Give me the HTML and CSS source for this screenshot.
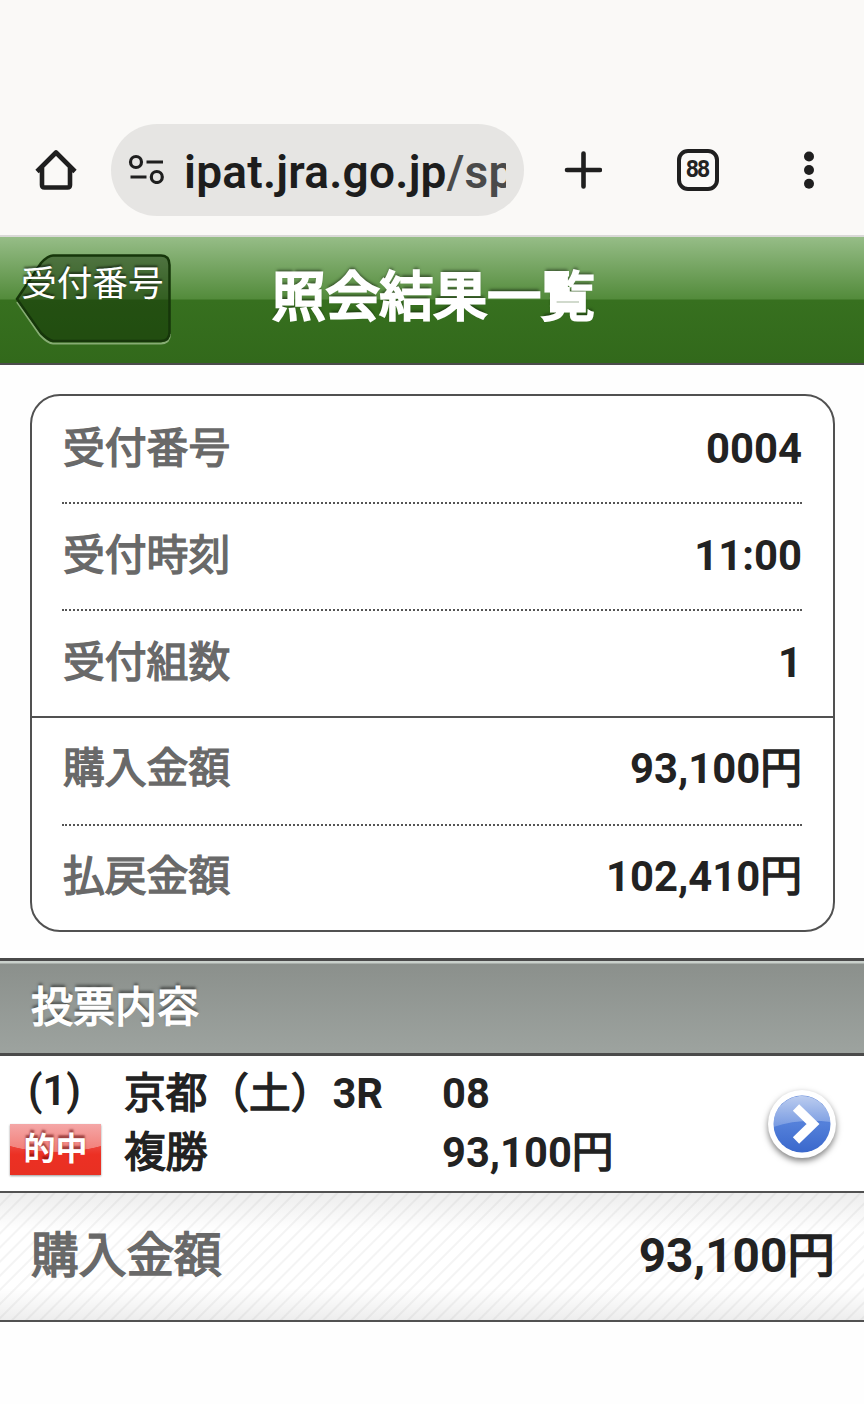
FILE: index.html
```html
<!DOCTYPE html>
<html lang="ja">

<head>
    <meta charset="UTF-8">
    <meta name="viewport" content="width=device-width, initial-scale=1.0">
    <title>照会結果一覧</title>
    <link rel="stylesheet" href="styles.css">
</head>

<body>

    <!-- browser bar -->
    <div class="browser">
        <svg class="icon-home" width="44" height="44" viewBox="0 0 44 44">
            <path d="M3 23.500 L22 4.500 L41 23.500 M8 19 V37 Q8 39.500 10.500 39.500 H33.500 Q36 39.500 36 37 V19" fill="none" stroke="#1f1f1f" stroke-width="4.600" stroke-linejoin="round"/>
        </svg>
        <div class="url-box">
            <svg class="icon-tune" width="36" height="30" viewBox="0 0 36 30">
                <g fill="none" stroke="#1f1f1f" stroke-width="3.200">
                    <circle cx="8" cy="8" r="5.500"/>
                    <path d="M18.500 8 H35 M2.500 23 H18.500"/>
                    <circle cx="28.800" cy="23" r="5.500"/>
                </g>
            </svg>
            <div class="url">ipat.jra.go.jp<span>/sp</span></div>
        </div>
        <svg class="icon-plus" width="38" height="38" viewBox="0 0 38 38">
            <path d="M19.500 2.500 V35.500 M3 19 H36" stroke="#1f1f1f" stroke-width="4.600" stroke-linecap="round"/>
        </svg>
        <div class="tabs">88</div>
        <svg class="icon-menu" width="12" height="38" viewBox="0 0 12 38" fill="#1f1f1f">
            <circle cx="6" cy="5.500" r="5"/>
            <circle cx="6" cy="19" r="5"/>
            <circle cx="6" cy="32.700" r="5"/>
        </svg>
    </div>

    <header class="header">
        <div class="back">
            <svg class="back-shape" width="160" height="96" viewBox="0 0 160 96">
                <path d="M2 49 L25 82 Q33 90.500 38 90.500 H146 Q155 90 155 81" fill="none" stroke="#86ac73" stroke-width="2"/>
                <path d="M2 46 L26 10 Q33 2.500 38 2.500 H146 Q154.500 2.500 154.500 12 V79 Q154.500 88 146 88 H38 Q33 87 26 80 Z" fill="#0a2400" fill-opacity=".42" stroke="#16360a" stroke-width="2.500"/>
            </svg>
            <span class="back-text">受付番号</span>
        </div>
        <h1 class="ja">照会結果一覧</h1>
    </header>

    <div class="card">
        <div class="group">
            <div class="row"><span class="label ja">受付番号</span><span>0004</span></div>
            <div class="row"><span class="label ja">受付時刻</span><span>11:00</span></div>
            <div class="row"><span class="label ja">受付組数</span><span>1</span></div>
        </div>
        <div class="group">
            <div class="row"><span class="label ja">購入金額</span><span>93,100<span class="ja">円</span></span></div>
            <div class="row"><span class="label ja">払戻金額</span><span>102,410<span class="ja">円</span></span></div>
        </div>
    </div>

    <h2 class="section ja">投票内容</h2>

    <div class="bet">
        <div class="bet-no">
            <div class="num">(1)</div>
            <div class="hit">的中</div>
        </div>
        <div class="bet-race">
            <div><span class="ja">京都（土）</span>3R</div>
            <div class="ja">複勝</div>
        </div>
        <div class="bet-money">
            <div>08</div>
            <div>93,100<span class="ja">円</span></div>
        </div>
        <svg class="arrow" width="84" height="84" viewBox="0 0 84 84">
            <defs>
                <linearGradient id="blue" x1="0" y1="0" x2="0" y2="1">
                    <stop offset="0" stop-color="#4f7bd6"/>
                    <stop offset=".5" stop-color="#5480da"/>
                    <stop offset="1" stop-color="#3a68cc"/>
                </linearGradient>
                <linearGradient id="gloss" x1="0" y1="0" x2="0" y2="1">
                    <stop offset="0" stop-color="#fff" stop-opacity=".62"/>
                    <stop offset="1" stop-color="#fff" stop-opacity=".2"/>
                </linearGradient>
            </defs>
            <circle class="ring" cx="42" cy="40" r="34" fill="#fff"/>
            <circle cx="42" cy="40" r="28.500" fill="url(#blue)"/>
            <path d="M13.500 43 A28.500 28.500 0 0 1 70.500 38 Q40 34 13.500 43 Z" fill="url(#gloss)"/>
            <path d="M36 23.500 L53 40 L36 56.500" fill="none" stroke="#fff" stroke-width="9"/>
        </svg>
    </div>

    <div class="total">
        <span class="label ja">購入金額</span>
        <span>93,100<span class="ja">円</span></span>
    </div>

</body>

</html>
```
FILE: styles.css
```css
* {
    box-sizing: border-box;
    padding: 0;
    margin: 0;
}

body {
    font-family: Roboto, 'Noto Sans CJK JP', sans-serif;
    font-weight: bold;
    color: #222;
    background-color: #fefefe;
}

/* regular kanji thickened a little, lighter than the real bold */
.ja {
    font-weight: normal;
    -webkit-text-stroke: 0.034em;
}

/* browser bar */
.browser {
    display: flex;
    align-items: center;
    height: 237px;
    padding: 104px 49px 0 34px;
    background-color: #faf9f7;
    border-bottom: 2px solid #d9d9d7;
}

.url-box {
    display: flex;
    align-items: center;
    width: 413px;
    height: 92px;
    margin-left: 33px;
    padding: 0 18px 0 17px;
    border-radius: 46px;
    background-color: #e6e5e3;
}

.icon-tune {
    flex-shrink: 0;
    margin-right: 20px;
    margin-bottom: 2px;
}

.url {
    flex: 1;
    overflow: hidden;
    white-space: nowrap;
    font-size: 46px;
    font-weight: 600;
    line-height: 60px;
    padding-top: 5px;
    letter-spacing: 0.25px;
    color: #1d1d1d;
}

.url span {
    color: #4a4a4a;
}

.icon-plus {
    margin-left: 40px;
}

.tabs {
    width: 42px;
    height: 42px;
    margin-left: 75px;
    border: 4px solid #1f1f1f;
    border-radius: 11px;
    font-size: 23px;
    line-height: 34px;
    letter-spacing: -2px;
    text-indent: -2px;
    text-align: center;
}

.icon-menu {
    margin-left: auto;
}

/* green header */
.header {
    display: flex;
    height: 128px;
    padding: 16px 0 0 15px;
    background: linear-gradient(#96bd87 0, #538b3b 62px, #37701f 63px, #32691b 125px);
    border-bottom: 2px solid #4c4c4c;
}

.back {
    position: relative;
    width: 160px;
    height: 96px;
}

.back-text {
    position: absolute;
    left: 6px;
    top: 10px;
    font-size: 35.7px;
    font-weight: normal;
    line-height: 42px;
    white-space: nowrap;
    color: #fff;
    text-shadow: 0 -2px 2px rgba(0, 0, 0, 0.5);
}

h1 {
    margin-left: 97px;
    padding-top: 12px;
    font-size: 53.8px;
    line-height: 66px;
    color: #fff;
    text-shadow: 0 -3px 3px rgba(0, 0, 0, 0.5);
}

h1.ja {
    -webkit-text-stroke: 0.052em;
}

/* receipt info */
.card {
    height: 538px;
    margin: 29px 29px 0 30px;
    border: 2px solid #515151;
    border-radius: 30px;
    background-color: #fff;
    font-size: 41.8px;
}

.group {
    padding: 0 31px 0 30px;
}

.group + .group {
    border-top: 2px solid #515151;
}

.row {
    display: flex;
    justify-content: space-between;
    height: 107px;
    padding: 22px 0 0 1px;
    line-height: 60px;
}

.row:first-child {
    height: 106px;
    padding-top: 23px;
}

.group + .group .row {
    padding-top: 21px;
}

.row + .row {
    border-top: 2px dotted #555;
}

.label {
    color: #696969;
}

/* section title */
.section {
    height: 98px;
    margin-top: 26px;
    padding: 17px 31px 0;
    border-top: 3px solid #4a4a4a;
    border-bottom: 3px solid #4a4a4a;
    background: linear-gradient(#c9d0cb 0, #c9d0cb 2px, #8b908c 3px, #9da39f 100%);
    font-size: 42px;
    line-height: 60px;
    color: #fff;
    text-shadow: 0 -3px 3px rgba(0, 0, 0, 0.5);
}

/* bet list */
.bet {
    display: flex;
    height: 135px;
    padding: 8px 20px 0 10px;
    background-color: #fff;
    font-size: 41.7px;
    line-height: 59px;
}

.bet-no {
    width: 114px;
}

.num {
    padding-left: 18px;
    font-weight: 600;
    line-height: 53px;
}

.hit {
    width: 91px;
    height: 51px;
    margin-top: 7px;
    background: radial-gradient(ellipse 75px 28px at 50% 0, rgba(255, 255, 255, 0.35) 98%, transparent 100%), linear-gradient(#ee7777 0, #ec3024 60%, #e83022 100%);
    box-shadow: 0 1px 2px rgba(0, 0, 0, 0.4);
    font-size: 32px;
    line-height: 50px;
    text-align: center;
    color: #fff;
    text-shadow: 0 -3px 2px rgba(90, 0, 0, 0.55);
}

.bet-race {
    width: 318px;
}

.arrow {
    margin-top: 20px;
    margin-left: auto;
}

.ring {
    filter: drop-shadow(0 3px 3px rgba(0, 0, 0, 0.5));
}

/* total */
.total {
    display: flex;
    justify-content: space-between;
    height: 131px;
    padding: 31px 29px 0 31px;
    border-top: 2px solid #515151;
    border-bottom: 2px solid #515151;
    background:
        linear-gradient(rgba(0, 0, 0, 0.07), transparent 30%, transparent 75%, rgba(0, 0, 0, 0.07)),
        repeating-linear-gradient(135deg, #fff 0, #fff 7px, #f4f4f4 8px, #f4f4f4 9px, #fff 10px);
    font-size: 47.7px;
    line-height: 64px;
}
```
